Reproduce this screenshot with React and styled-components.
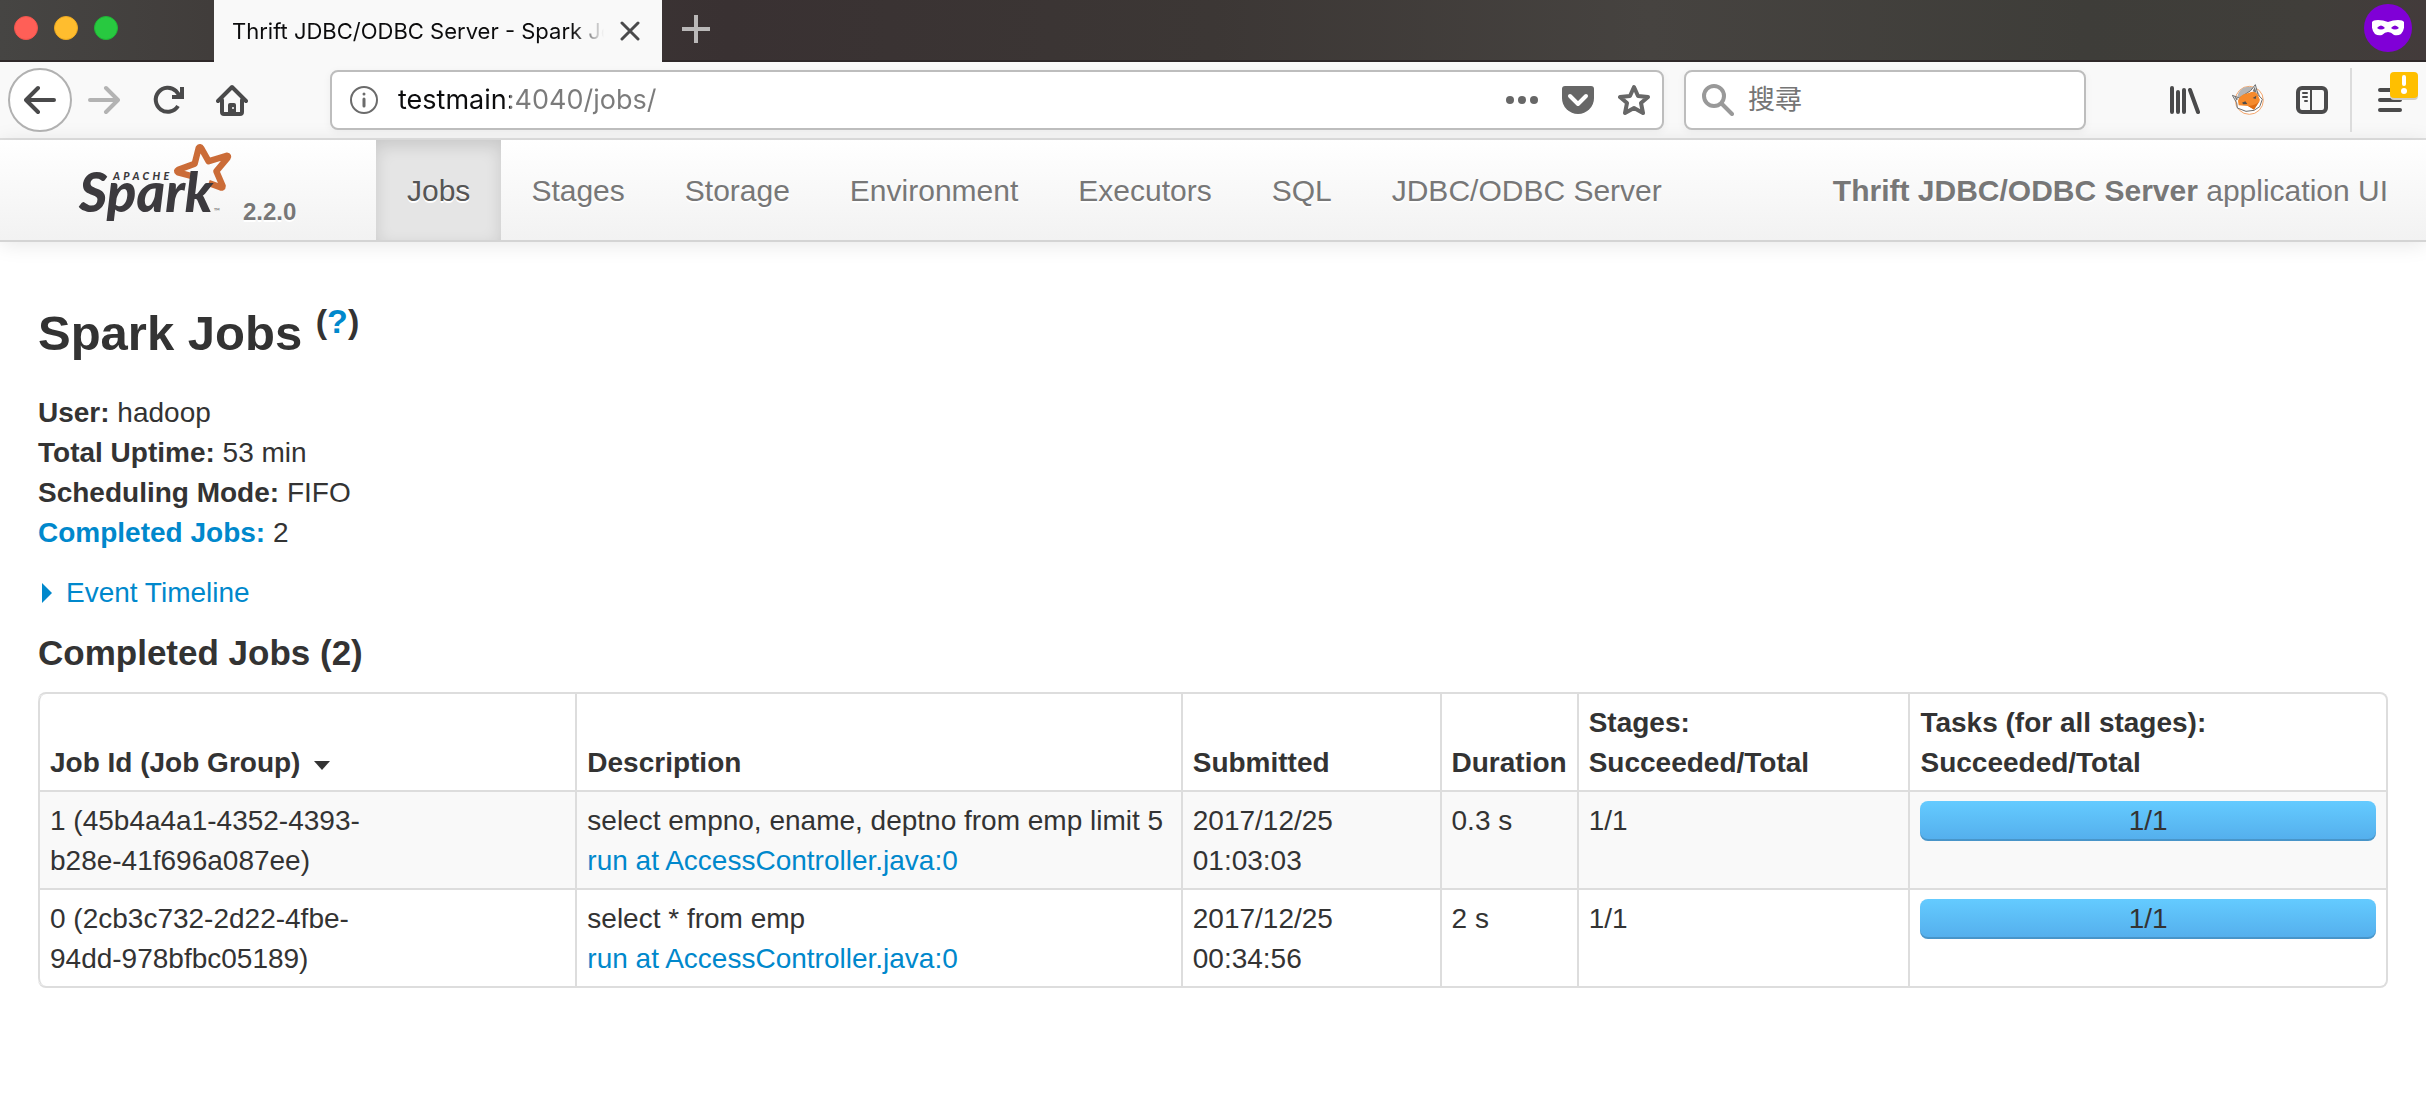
import React from "react";
import styled, { createGlobalStyle, css } from "styled-components";

const sans = `"Liberation Sans", Arial, sans-serif`;
const system = `Inter, Roboto, "Noto Sans CJK TC", sans-serif`;

const GlobalStyle = createGlobalStyle`
  *, *::before, *::after { box-sizing: border-box; }
  body {
    margin: 0;
    background: #fff;
    color: #333;
    font: 28px/40px ${sans};
  }
  a { color: #0088cc; text-decoration: none; }
`;

/* ---------- browser window ---------- */

const TabStrip = styled.div`
  display: flex;
  align-items: stretch;
  height: 62px;
  background: linear-gradient(90deg, #464543 0, #3f3a38 12%, #393132 30%, #3c3735 50%, #464340 68%, #3e3d39 86%, #403e3a 95%, #433b3b 100%);
  box-shadow: inset 0 -2px 0 #2f292a;
`;

const WindowControls = styled.div`
  display: flex;
  gap: 16px;
  width: 214px;
  padding: 16px 14px;
  flex: none;
`;

const WindowButton = styled.button`
  width: 24px;
  height: 24px;
  padding: 0;
  border: 1px solid ${(p) => p.$edge};
  border-radius: 50%;
  background: ${(p) => p.$fill};
`;

const Tab = styled.div`
  display: flex;
  align-items: center;
  gap: 14px;
  width: 448px;
  padding: 0 20px 0 18px;
  background: #f9f9f9;
  color: #0c0c0d;
  font: 22px/28px ${system};
`;

const TabTitle = styled.span`
  flex: 1;
  overflow: hidden;
  white-space: nowrap;
  mask-image: linear-gradient(90deg, #000 calc(100% - 32px), transparent);
`;

const PlainButton = styled.button`
  display: flex;
  align-items: center;
  justify-content: center;
  flex: none;
  width: ${(p) => p.$width || 64}px;
  padding: 0;
  border: 0;
  background: none;
  color: ${(p) => p.$color || "#4a4a4b"};
`;

const PrivateBadge = styled.span`
  display: flex;
  align-items: center;
  justify-content: center;
  width: 48px;
  height: 48px;
  margin: 4px 14px 0 auto;
  border-radius: 50%;
  background: #8000d7;
`;

const Toolbar = styled.div`
  display: flex;
  align-items: center;
  height: 78px;
  padding-left: 8px;
  border-bottom: 2px solid #e0e0e0;
  background: #f9f9f9;
`;

const BackButton = styled(PlainButton)`
  height: 64px;
  border: 2px solid #b1b1b1;
  border-radius: 50%;
  background: #fff;
`;

const field = css`
  display: flex;
  align-items: center;
  height: 60px;
  border: 2px solid #bdbdbd;
  border-radius: 8px;
  background: #fff;
  box-shadow: 0 2px 8px rgba(0, 0, 0, 0.05);
`;

const AddressBar = styled.div`
  ${field}
  flex: 1;
  margin: 0 20px 0 66px;
  padding: 0 12px 0 18px;
  gap: 24px;
`;

const SearchBar = styled.label`
  ${field}
  width: 402px;
  margin-right: 66px;
  padding: 0 16px;
  gap: 14px;
`;

const TextInput = styled.input`
  flex: 1;
  min-width: 0;
  padding: 0;
  border: 0;
  outline: 0;
  background: none;
  color: #0c0c0d;
  font: 27px/40px ${system};

  &::placeholder {
    color: #757575;
    opacity: 1;
  }
`;

const AddressInput = styled(TextInput)`
  margin-left: -4px;
  background: linear-gradient(90deg, #0c0c0d 112px, #7b7b7b 112px);
  background-clip: text;
  -webkit-text-fill-color: transparent;
`;

const Divider = styled.span`
  width: 2px;
  height: 64px;
  margin-left: 6px;
  background: #dcdcdc;
`;

const MenuButton = styled(PlainButton)`
  position: relative;
  padding-left: 2px;
`;

const UpdateBadge = styled.span`
  position: absolute;
  top: -16px;
  right: 8px;
  display: flex;
  align-items: center;
  justify-content: center;
  width: 28px;
  height: 26px;
  border-radius: 4px;
  background: #ffbf00;
  box-shadow: 0 2px 0 #d0cdc4;
`;

/* ---------- Spark navigation ---------- */

const Navbar = styled.header`
  display: flex;
  height: 102px;
  padding-right: 38px;
  border-bottom: 2px solid #d4d4d4;
  background: linear-gradient(#fff, #f2f2f2);
  box-shadow: 0 2px 20px rgba(0, 0, 0, 0.1);
  font-size: 30px;
  color: #777;
  text-shadow: 0 2px 0 #fff;
`;

const Brand = styled.a`
  display: flex;
  align-items: flex-end;
  width: 376px;
  padding: 0 0 10px 78px;
  color: #777;
  font-size: 24px;
  line-height: 24px;
  font-weight: bold;
`;

const Logo = styled.svg`
  width: 160px;
  height: 88px;
  margin: 0 5px 2px 0;
  text-shadow: none;
`;

const Version = styled.span`
  padding-bottom: 6px;
`;

const NavList = styled.nav`
  display: flex;
`;

const NavLink = styled.a`
  padding: 31px ${(p) => (p.$active ? 31 : 30)}px 29px;
  color: ${(p) => (p.$active ? "#555" : "#777")};
  ${(p) =>
    p.$active &&
    css`
      background: #e5e5e5;
      box-shadow: inset 0 6px 16px rgba(0, 0, 0, 0.125);
    `}
`;

const AppName = styled.p`
  margin: 0 0 0 auto;
  padding: 31px 0 29px;
  white-space: nowrap;
`;

/* ---------- page content ---------- */

const Content = styled.main`
  padding: 51px 38px;
`;

const Title = styled.h3`
  margin: 0 0 20px;
  font-size: 49px;
  line-height: 80px;

  sup {
    font-size: 34px;
    line-height: 0;
  }
`;

const Summary = styled.ul`
  margin: 0 0 20px;
  padding: 0;
  list-style: none;
`;

const TimelineToggle = styled.a`
  display: flex;
  align-items: center;
  gap: 14px;
  padding-left: 4px;

  &::before {
    content: "";
    border: 10px solid transparent;
    border-left-color: #0088cc;
    border-right: 0;
  }
`;

const Subtitle = styled.h4`
  margin: 20px 0 19px;
  font-size: 35px;
  line-height: 40px;
`;

const JobTable = styled.table`
  width: 100%;
  border: 2px solid #ddd;
  border-left: 0;
  border-radius: 8px;
  border-spacing: 0;

  th, td {
    padding: 9px 10px 7px;
    border-left: 2px solid #ddd;
    text-align: left;
    vertical-align: top;
  }
  th { vertical-align: bottom; }
  td { border-top: 2px solid #ddd; }
  tbody tr:nth-child(odd) td { background: #f9f9f9; }
  thead th:first-child { border-top-left-radius: 8px; }
  tbody tr:last-child td:first-child { border-bottom-left-radius: 8px; }
`;

const SortArrow = styled.span`
  display: inline-block;
  margin-left: 14px;
  vertical-align: 2px;
  border: 8px solid transparent;
  border-top: 9px solid #333;
  border-bottom: 0;
`;

const Progress = styled.div`
  height: 40px;
  border-radius: 8px;
  background: #f7f7f7;
  display: grid;
  text-align: center;

  > * { grid-area: 1 / 1; }
`;

const ProgressFill = styled.div`
  border-radius: 8px;
  background: linear-gradient(#64cbff, #54aeec);
  box-shadow: inset 0 -2px 0 rgba(0, 0, 0, 0.15);
`;

/* ---------- drawings ---------- */

const Icon = ({ w = 32, h = 32, children, ...rest }) => (
  <svg
    width={w}
    height={h}
    viewBox={`0 0 ${w} ${h}`}
    fill="none"
    stroke="currentColor"
    strokeWidth="4"
    strokeLinecap="round"
    strokeLinejoin="round"
    aria-hidden="true"
    {...rest}
  >
    {children}
  </svg>
);

const Arrow = ({ forward }) => (
  <Icon>
    <path d={forward ? "M2 16H29M18 4L30 16L18 28" : "M30 16H3M14 4L2 16L14 28"} />
  </Icon>
);

const SparkLogo = () => (
  <Logo viewBox="54 30 480 264" role="img" aria-label="Apache Spark">
    <path
      d="M394 138L354 127Q348 123 355 119L404 101L416 54Q420 48 424 55L446 94L500 77Q507 78 503 83L469 124L488 168Q488 175 481 172L446 159"
      fill="none"
      stroke="#cb6c38"
      strokeWidth="19"
      strokeLinejoin="round"
    />
    <text x="57" y="247" fill="#3c3a3e" fontFamily="Lato, sans-serif" fontWeight="900" fontStyle="italic" fontSize="164">Spark</text>
    <text x="159" y="150" fill="#3c3a3e" fontFamily="Lato, sans-serif" fontWeight="900" fontStyle="italic" fontSize="32" letterSpacing="10">APACHE</text>
    <text x="461" y="252" fill="#8a8a8a" fontFamily="Lato, sans-serif" fontSize="24">™</text>
  </Logo>
);

const Fox = () => (
  <svg width="32" height="32" viewBox="336 254 96 96" aria-hidden="true">
    <circle cx="388" cy="303" r="42" fill="#fff" stroke="#f4a56a" strokeWidth="3" />
    <circle cx="386" cy="296" r="34" fill="#b5b5b5" />
    <path d="M337 288L358 296L392 274L406 256L414 286L427 300L419 322L402 333L378 336L352 326L350 310Z" fill="#fff" stroke="#6b6b6b" strokeWidth="3" />
    <path d="M354 304Q358 286 386 281Q408 270 415 290L420 302L402 330L384 320L356 318Z" fill="#f58a2c" />
    <path d="M384 320L402 331L420 304Q408 318 384 320Z" fill="#dd6c14" />
    <path d="M366 310L376 306L382 314L370 315ZM398 296L409 289L407 299Z" fill="#4d4d4d" />
    <path d="M342 290L354 298L350 304ZM404 262L410 280L398 276Z" fill="#777" />
  </svg>
);

const Mask = () => (
  <svg width="32" height="16" viewBox="0 0 32 16" aria-hidden="true">
    <path
      fill="#fff"
      fillRule="evenodd"
      d="M0 2Q1 0 6 0Q11 0 16 2Q21 0 26 0Q31 0 32 2Q33 10 29 14Q26 16 22 15Q19 12 16 12Q13 12 10 15Q6 16 3 14Q-1 10 0 2ZM5 8Q9 11 13 8Q9 3 5 8ZM19 8Q23 11 27 8Q23 3 19 8Z"
    />
  </svg>
);

/* ---------- data ---------- */

const pages = ["Jobs", "Stages", "Storage", "Environment", "Executors", "SQL", "JDBC/ODBC Server"];

const columnWidths = [538, 606, 259, 137, 332, 478];

const jobs = [
  {
    id: ["1 (45b4a4a1-4352-4393-", "b28e-41f696a087ee)"],
    query: "select empno, ename, deptno from emp limit 5",
    submitted: "2017/12/25 01:03:03",
    duration: "0.3 s",
  },
  {
    id: ["0 (2cb3c732-2d22-4fbe-", "94dd-978bfbc05189)"],
    query: "select * from emp",
    submitted: "2017/12/25 00:34:56",
    duration: "2 s",
  },
];

export default function App() {
  return (
    <>
      <GlobalStyle />
      <TabStrip>
        <WindowControls>
          <WindowButton aria-label="Close window" $fill="#ff5f57" $edge="#f0544c" />
          <WindowButton aria-label="Minimize window" $fill="#ffbd2e" $edge="#eda921" />
          <WindowButton aria-label="Zoom window" $fill="#28c940" $edge="#1fb535" />
        </WindowControls>
        <Tab>
          <TabTitle>Thrift JDBC/ODBC Server - Spark Jobs</TabTitle>
          <PlainButton $width={24} aria-label="Close tab">
            <Icon w={20} h={20} strokeWidth="3"><path d="M2 2L18 18M18 2L2 18" /></Icon>
          </PlainButton>
        </Tab>
        <PlainButton $width={68} $color="#bab8b8" aria-label="New tab">
          <Icon w={28} h={32} strokeLinecap="butt"><path d="M14 0V28M0 14H28" /></Icon>
        </PlainButton>
        <PrivateBadge><Mask /></PrivateBadge>
      </TabStrip>

      <Toolbar>
        <BackButton aria-label="Back"><Arrow /></BackButton>
        <PlainButton $color="#b3b3b3" aria-label="Forward"><Arrow forward /></PlainButton>
        <PlainButton aria-label="Reload">
          <Icon><path d="M26 22A12 12 0 1 1 24 7L28 12M30 3V13H20" strokeLinecap="butt" strokeLinejoin="miter" /></Icon>
        </PlainButton>
        <PlainButton aria-label="Home">
          <Icon>
            <path d="M2 17L16 3L30 17M6 16V28Q6 30 8 30H24Q26 30 26 28V16" />
            <path d="M12 30V21Q12 19 14 19H18Q20 19 20 21V30Z" fill="currentColor" stroke="none" />
            <circle cx="17" cy="24" r="1" fill="#fff" stroke="none" />
          </Icon>
        </PlainButton>

        <AddressBar>
          <Icon w={28} h={28} stroke="#6b6b6b">
            <circle cx="14" cy="14" r="13" strokeWidth="2" />
            <path d="M14 13V20M14 8V8" strokeWidth="3" />
          </Icon>
          <AddressInput aria-label="Address" defaultValue="testmain:4040/jobs/" />
          <PlainButton $width={32} $color="#676767" aria-label="Page actions">
            <Icon fill="currentColor" stroke="none"><circle cx="4" cy="16" r="4" /><circle cx="16" cy="16" r="4" /><circle cx="28" cy="16" r="4" /></Icon>
          </PlainButton>
          <PlainButton $width={32} $color="#676767" aria-label="Save to Pocket">
            <Icon>
              <path d="M3 2H29Q32 2 32 5V14A16 16 0 0 1 0 14V5Q0 2 3 2Z" fill="currentColor" stroke="none" />
              <path d="M8 12L16 20L24 12" stroke="#fff" />
            </Icon>
          </PlainButton>
          <PlainButton $width={32} $color="#676767" aria-label="Bookmark this page">
            <Icon><path d="M16 3L20 12L30 13L23 19L25 29L16 24L7 29L9 19L2 13L12 12Z" /></Icon>
          </PlainButton>
        </AddressBar>

        <SearchBar>
          <Icon stroke="#999"><circle cx="12" cy="12" r="10" /><path d="M20 20L30 30" /></Icon>
          <TextInput placeholder="搜尋" aria-label="搜尋" />
        </SearchBar>

        <PlainButton aria-label="Library">
          <Icon><path d="M4 4V28M10 8V28M16 6V28M22 6L30 28" /></Icon>
        </PlainButton>
        <PlainButton aria-label="FoxyProxy"><Fox /></PlainButton>
        <PlainButton aria-label="Sidebars">
          <Icon>
            <rect x="2" y="4" width="28" height="24" rx="4" />
            <path d="M15 4V28" strokeWidth="2" />
            <path d="M7 9H11M7 13H11M9 17H11" strokeWidth="2" />
          </Icon>
        </PlainButton>
        <Divider />
        <MenuButton $width={74} aria-label="Open menu">
          <Icon w={24} h={24}><path d="M2 2H22M2 12H22M2 22H22" /></Icon>
          <UpdateBadge>
            <Icon w={6} h={20} stroke="#fff" fill="#fff">
              <path d="M3 2L3 9" strokeWidth="4" /><circle cx="3" cy="16" r="3" stroke="none" />
            </Icon>
          </UpdateBadge>
        </MenuButton>
      </Toolbar>

      <Navbar>
        <Brand href="#">
          <SparkLogo />
          <Version>2.2.0</Version>
        </Brand>
        <NavList>
          {pages.map((page, i) => (
            <NavLink key={page} href="#" $active={i === 0}>{page}</NavLink>
          ))}
        </NavList>
        <AppName><strong>Thrift JDBC/ODBC Server</strong> application UI</AppName>
      </Navbar>

      <Content>
        <Title>Spark Jobs <sup>(<a href="#">?</a>)</sup></Title>
        <Summary>
          <li><strong>User:</strong> hadoop</li>
          <li><strong>Total Uptime:</strong> 53 min</li>
          <li><strong>Scheduling Mode:</strong> FIFO</li>
          <li><a href="#completed"><strong>Completed Jobs:</strong></a> 2</li>
        </Summary>
        <TimelineToggle href="#">Event Timeline</TimelineToggle>
        <Subtitle id="completed">Completed Jobs (2)</Subtitle>
        <JobTable>
          <colgroup>
            {columnWidths.map((width) => <col key={width} style={{ width }} />)}
          </colgroup>
          <thead>
            <tr>
              <th>Job Id (Job Group)<SortArrow /></th>
              <th>Description</th>
              <th>Submitted</th>
              <th>Duration</th>
              <th>Stages:<br />Succeeded/Total</th>
              <th>Tasks (for all stages):<br />Succeeded/Total</th>
            </tr>
          </thead>
          <tbody>
            {jobs.map((job) => (
              <tr key={job.query}>
                <td>{job.id[0]}<br />{job.id[1]}</td>
                <td>{job.query}<br /><a href="#">run at AccessController.java:0</a></td>
                <td>{job.submitted}</td>
                <td>{job.duration}</td>
                <td>1/1</td>
                <td>
                  <Progress>
                    <ProgressFill style={{ width: "100%" }} />
                    <span>1/1</span>
                  </Progress>
                </td>
              </tr>
            ))}
          </tbody>
        </JobTable>
      </Content>
    </>
  );
}
